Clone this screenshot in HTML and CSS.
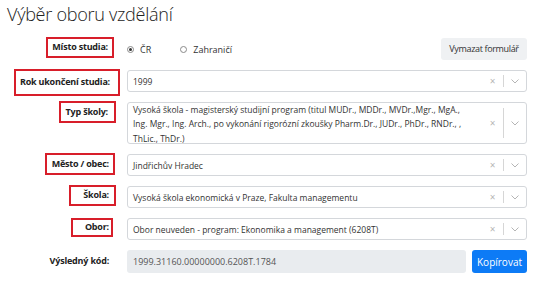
FILE: index.html
```html
<!DOCTYPE html>
<html lang="cs">
<head>
<meta charset="utf-8">
<link rel="stylesheet" href="styles.css">
</head>
<body>
<div class="page">
  <h1 class="title">Výběr oboru vzdělání</h1>
  <div class="form">
    <div class="lab"><span class="box box-misto">Místo studia:</span></div>
    <div class="ctl row-radio">
      <div class="radios">
        <label class="radio"><span class="dot checked"></span>ČR</label>
        <label class="radio"><span class="dot"></span>Zahraničí</label>
      </div>
      <button class="btn btn-light">Vymazat formulář</button>
    </div>

    <div class="lab"><span class="box box-rok">Rok ukončení studia:</span></div>
    <div class="ctl">
      <div class="select"><div class="val">1999</div><div class="ind"><span class="x">×</span><span class="sep"></span><svg class="chev" viewBox="0 0 8 5" width="8" height="5"><path d="M0.5 0.5 L4 4 L7.5 0.5" fill="none" stroke="#b5b5b5" stroke-width="1"/></svg></div></div>
    </div>

    <div class="lab"><span class="box box-typ">Typ školy:</span></div>
    <div class="ctl">
      <div class="select tall"><div class="val multi">Vysoká škola - magisterský studijní program (titul MUDr., MDDr., MVDr.,Mgr., MgA.,<br>Ing. Mgr., Ing. Arch., po vykonání rigorózní zkoušky Pharm.Dr., JUDr., PhDr., RNDr., ,<br>ThLic., ThDr.)</div><div class="ind"><span class="x">×</span><span class="sep"></span><svg class="chev" viewBox="0 0 8 5" width="8" height="5"><path d="M0.5 0.5 L4 4 L7.5 0.5" fill="none" stroke="#b5b5b5" stroke-width="1"/></svg></div></div>
    </div>

    <div class="lab"><span class="box box-mesto">Město / obec:</span></div>
    <div class="ctl">
      <div class="select"><div class="val">Jindřichův Hradec</div><div class="ind"><span class="x">×</span><span class="sep"></span><svg class="chev" viewBox="0 0 8 5" width="8" height="5"><path d="M0.5 0.5 L4 4 L7.5 0.5" fill="none" stroke="#b5b5b5" stroke-width="1"/></svg></div></div>
    </div>

    <div class="lab"><span class="box box-skola">Škola:</span></div>
    <div class="ctl">
      <div class="select"><div class="val">Vysoká škola ekonomická v Praze, Fakulta managementu</div><div class="ind"><span class="x">×</span><span class="sep"></span><svg class="chev" viewBox="0 0 8 5" width="8" height="5"><path d="M0.5 0.5 L4 4 L7.5 0.5" fill="none" stroke="#b5b5b5" stroke-width="1"/></svg></div></div>
    </div>

    <div class="lab"><span class="box box-obor">Obor:</span></div>
    <div class="ctl">
      <div class="select"><div class="val">Obor neuveden - program: Ekonomika a management (6208T)</div><div class="ind"><span class="x">×</span><span class="sep"></span><svg class="chev" viewBox="0 0 8 5" width="8" height="5"><path d="M0.5 0.5 L4 4 L7.5 0.5" fill="none" stroke="#b5b5b5" stroke-width="1"/></svg></div></div>
    </div>

    <div class="lab"><span class="plain">Výsledný kód:</span></div>
    <div class="ctl row-out">
      <div class="output">1999.31160.00000000.6208T.1784</div>
      <button class="btn btn-primary">Kopírovat</button>
    </div>
  </div>
</div>
</body>
</html>
```
FILE: styles.css
```css
* { box-sizing: border-box; }
html, body { margin: 0; padding: 0; background: #fff; }
body {
  font-family: "Open Sans", "Noto Sans", sans-serif;
  color: #333;
  width: 547px;
  height: 287px;
  overflow: hidden;
}
.page { padding: 0 20px 0 0; }
.title {
  margin: 0;
  padding: 2px 0 0 7px;
  font-size: 18.1px;
  font-weight: 300;
  letter-spacing: -0.3px;
  line-height: 24px;
  color: #222;
  height: 38px;
}
.form {
  display: grid;
  grid-template-columns: 121px 1fr;
  column-gap: 6px;
  row-gap: 10px;
}
.lab {
  display: flex;
  justify-content: flex-end;
  align-items: flex-start;
  height: 22px;
}
.box {
  display: inline-block;
  flex: none;
  border: 2px solid #d81e2a;
  font-weight: 700;
  font-size: 9px;
  letter-spacing: -0.2px;
  line-height: 12px;
  color: #222;
  margin-top: -1px;
  white-space: nowrap;
}
.box-misto { padding: 2px 4px 3px 4px; margin-right: 7px; }
.box-rok { padding: 5px 8px 6px 4px; margin-right: 1px; }
.box-typ { padding: 3px 6px 3px 5px; margin-right: 5px; }
.box-mesto { padding: 3px 4px 3px 5px; margin-right: 6px; }
.box-skola { padding: 2px 5px 3px 12px; margin-right: 5px; }
.box-obor { padding: 1px 2px 2px 12px; margin-right: 8px; margin-top: 0; }
.plain {
  font-weight: 700;
  font-size: 9px;
  letter-spacing: -0.2px;
  line-height: 22px;
  color: #222;
  margin-right: 12px;
}
.ctl { min-width: 0; }
.row-radio {
  display: flex;
  justify-content: space-between;
  align-items: center;
  height: 22px;
}
.radios { display: flex; align-items: center; gap: 29px; }
.radio {
  display: flex;
  align-items: center;
  font-size: 9px;
  color: #333;
  gap: 6px;
}
.dot {
  width: 7px;
  height: 7px;
  border: 1px solid #8a8a8a;
  border-radius: 50%;
  display: inline-flex;
  align-items: center;
  justify-content: center;
}
.dot.checked::after {
  content: "";
  width: 3px;
  height: 3px;
  border-radius: 50%;
  background: #333;
}
.btn {
  font-family: inherit;
  font-size: 9px;
  border: none;
  border-radius: 3px;
  height: 22px;
  padding: 0;
  cursor: pointer;
  flex: none;
}
.btn-light {
  background: #eff1f3;
  color: #333;
  width: 86px;
  letter-spacing: -0.35px;
  margin-top: -1px;
}
.btn-primary {
  background: #0d7bf6;
  color: #fff;
  width: 55px;
  height: 23px;
  font-size: 10px;
}
.select {
  display: flex;
  align-items: center;
  height: 22px;
  border: 1px solid #d4d7db;
  border-radius: 3px;
  background: #fff;
}
.select.tall { height: 42px; align-items: stretch; }
.val {
  flex: 1;
  min-width: 0;
  padding: 0 6px 0 5px;
  font-size: 8.5px;
  color: #333;
  white-space: nowrap;
  overflow: hidden;
}
.val.multi {
  line-height: 14.3px;
  padding-top: 0;
  padding-right: 2px;
}
.ind {
  display: flex;
  align-items: center;
  width: 44px;
  flex: none;
  color: #b5b5b5;
}
.tall .ind { padding: 5px 0; }
.x {
  width: 21px;
  text-align: center;
  font-size: 10px;
  line-height: 10px;
}
.sep {
  width: 1px;
  align-self: center;
  height: 12px;
  background: #d6d6d6;
}
.tall .sep { align-self: stretch; height: auto; }
.chev { margin-left: 7px; }
.row-out {
  display: flex;
  gap: 6px;
}
.output {
  flex: 1;
  height: 23px;
  background: #e9ecef;
  border-radius: 3px;
  font-size: 9px;
  line-height: 23px;
  color: #555;
  padding-left: 6px;
}
```
